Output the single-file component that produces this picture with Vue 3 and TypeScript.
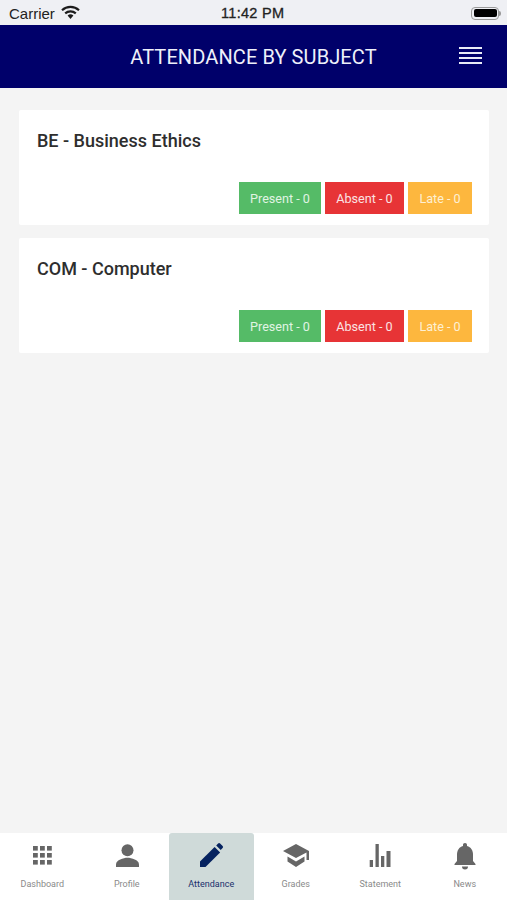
<script setup lang="ts">
const subjects = ['BE - Business Ethics', 'COM - Computer']

const tabs = [
  { label: 'Dashboard', icon: 'grid' },
  { label: 'Profile', icon: 'person' },
  { label: 'Attendance', icon: 'pencil', active: true },
  { label: 'Grades', icon: 'cap' },
  { label: 'Statement', icon: 'chart' },
  { label: 'News', icon: 'bell' },
]

const gridCells = [0, 1, 2].flatMap((row) => [0, 1, 2].map((col) => ({ x: 5 + col * 7, y: 4 + row * 7 })))
</script>

<template>
  <div class="screen">
    <div class="status-bar">
      <div class="status-left">
        <span>Carrier</span>
        <svg class="wifi" width="19" height="14" viewBox="0 0 19 14">
          <path d="M9.5 14 6.6 10.6a4.4 4.4 0 0 1 5.8 0z" fill="#1c1c1c" />
          <path d="M1 5.2a12.6 12.6 0 0 1 17 0" fill="none" stroke="#1c1c1c" stroke-width="2.2" />
          <path d="M4.2 8.4a8 8 0 0 1 10.6 0" fill="none" stroke="#1c1c1c" stroke-width="2.2" />
        </svg>
      </div>
      <span class="clock">11:42 PM</span>
      <div class="battery">
        <div class="battery-body"><div class="battery-fill"></div></div>
        <div class="battery-nub"></div>
      </div>
    </div>

    <header class="app-header">
      <h1>ATTENDANCE BY SUBJECT</h1>
      <div class="menu">
        <span v-for="n in 4" :key="n"></span>
      </div>
    </header>

    <main class="content">
      <section v-for="subject in subjects" :key="subject" class="card">
        <h2>{{ subject }}</h2>
        <div class="badges">
          <span class="badge present">Present - 0</span>
          <span class="badge absent">Absent - 0</span>
          <span class="badge late">Late - 0</span>
        </div>
      </section>
    </main>

    <nav class="tabs">
      <div v-for="tab in tabs" :key="tab.label" class="tab" :class="{ active: tab.active }">
        <svg class="tab-icon" width="28" height="28" viewBox="0 0 28 28">
          <g v-if="tab.icon === 'grid'">
            <rect v-for="(c, i) in gridCells" :key="i" :x="c.x" :y="c.y" width="4.8" height="4.6" />
          </g>
          <g v-else-if="tab.icon === 'person'">
            <circle cx="14.5" cy="8.2" r="6" />
            <path d="M3 25v-2.600c0-4.400 7.600-6.600 11.500-6.600S26 18 26 22.400V25z" />
          </g>
          <g v-else-if="tab.icon === 'pencil'">
            <path d="M3 25v-5.500L17.600 5l5.500 5.500L8.500 25z" />
            <path d="m19.200 3.400 1.900-1.900a1.400 1.400 0 0 1 2 0l2.500 2.500a1.400 1.400 0 0 1 0 2l-1.900 1.900z" />
          </g>
          <g v-else-if="tab.icon === 'cap'">
            <path d="M14 2 1 9l13 7 10.500-5.600V18H27V9z" />
            <path d="M5.500 14.500v5L14 25l8.500-5.500v-5L14 19.500z" />
          </g>
          <g v-else-if="tab.icon === 'chart'">
            <rect x="3.700" y="18" width="3.300" height="7" />
            <rect x="9.500" y="2" width="3.300" height="23" />
            <rect x="15" y="14" width="3.300" height="11" />
            <rect x="20.500" y="9" width="4" height="16" />
          </g>
          <g v-else>
            <path d="M14 1c1.300 0 2 .9 2 2v1c4 1 6 4.500 6 8.500V19l2.500 3v1h-21v-1L6 19v-6.500C6 8.500 8 5 12 4V3c0-1.100.7-2 2-2z" />
            <path d="M11 24.500h6a3 3 0 0 1-6 0z" />
          </g>
        </svg>
        <span class="tab-label">{{ tab.label }}</span>
      </div>
    </nav>
  </div>
</template>

<style scoped>
.screen {
  width: 507px;
  height: 900px;
  display: flex;
  flex-direction: column;
  background: #f4f4f4;
  font-family: Roboto, "Liberation Sans", sans-serif;
  overflow: hidden;
}
.status-bar {
  height: 25px;
  flex: none;
  display: flex;
  align-items: center;
  justify-content: space-between;
  padding: 2px 6px 0 9px;
  box-sizing: border-box;
  background: #eff0f4;
  color: #222;
  font-family: "Liberation Sans", sans-serif;
  font-size: 15px;
  position: relative;
}
.status-left {
  display: flex;
  align-items: center;
  gap: 6px;
}
.wifi {
  margin-top: -3px;
}
.clock {
  position: absolute;
  left: 221px;
  top: 5px;
  font-size: 14.500px;
  letter-spacing: 0.3px;
  -webkit-text-stroke: 0.3px #222;
}
.battery {
  display: flex;
  align-items: center;
  margin-top: -1px;
}
.battery-body {
  width: 28px;
  height: 13px;
  box-sizing: border-box;
  border: 1.500px solid #9a9a9a;
  border-radius: 4px;
  padding: 1.500px;
}
.battery-fill {
  height: 100%;
  background: #000;
  border-radius: 2px;
}
.battery-nub {
  width: 2px;
  height: 5px;
  background: #9a9a9a;
  border-radius: 0 2px 2px 0;
}
.app-header {
  height: 63px;
  flex: none;
  box-sizing: border-box;
  padding-top: 1px;
  background: #00006a;
  display: flex;
  align-items: center;
  justify-content: center;
  position: relative;
}
.app-header h1 {
  margin: 0;
  font-size: 20px;
  font-weight: 400;
  color: #eef0fa;
  letter-spacing: 0.1px;
}
.menu {
  position: absolute;
  right: 25px;
  top: 22px;
  width: 23px;
  display: flex;
  flex-direction: column;
  gap: 3px;
}
.menu span {
  height: 2px;
  background: #e9ebf7;
}
.content {
  flex: 1;
  padding: 22px 18px 0 19px;
  display: flex;
  flex-direction: column;
  gap: 13px;
}
.card {
  height: 115px;
  box-sizing: border-box;
  background: #fff;
  border-radius: 2px;
  padding: 20px 17px 11px 18px;
  display: flex;
  flex-direction: column;
  justify-content: space-between;
}
.card h2 {
  margin: 0;
  font-size: 18px;
  line-height: 22px;
  font-weight: 500;
  color: #2e2e2e;
}
.badges {
  display: flex;
  justify-content: flex-end;
  gap: 4px;
}
.badge {
  height: 32px;
  display: flex;
  align-items: center;
  justify-content: center;
  font-size: 12.600px;
  color: #fbe3e3;
}
.present {
  width: 82px;
  background: #55bb67;
  color: #e0f4e3;
}
.absent {
  width: 79px;
  background: #e73436;
}
.late {
  width: 64px;
  background: #fdb73e;
  color: #fdf0d4;
}
.tabs {
  height: 67px;
  flex: none;
  background: #fff;
  display: flex;
}
.tab {
  flex: 1;
  display: flex;
  flex-direction: column;
  align-items: center;
  padding-top: 9px;
  box-sizing: border-box;
  color: #8a8a8a;
  fill: #666;
}
.tab.active {
  background: #cfdad9;
  border-radius: 3px 3px 0 0;
  color: #1a2f6b;
  fill: #05225f;
}
.tab-icon {
  display: block;
}
.tab-label {
  margin-top: 8px;
  font-size: 9px;
  line-height: 12px;
}
</style>
